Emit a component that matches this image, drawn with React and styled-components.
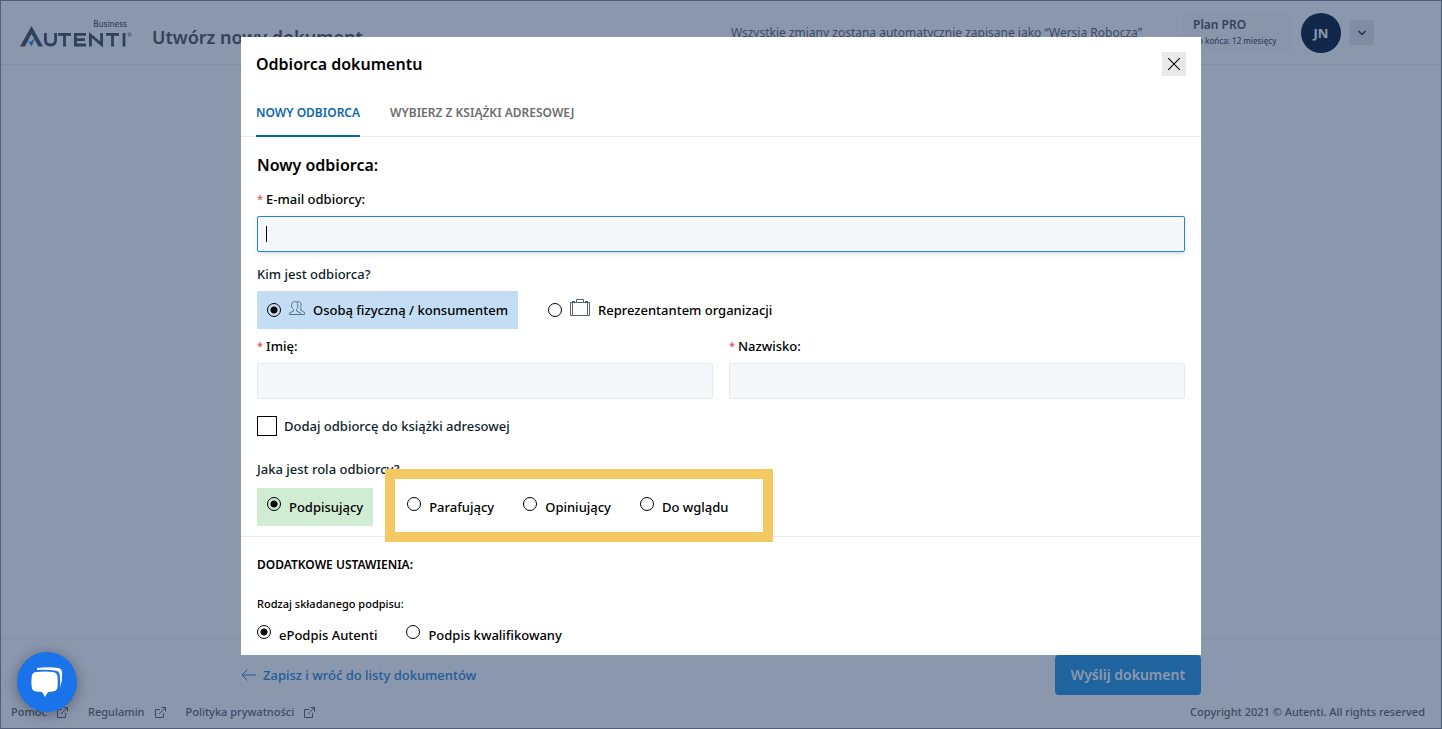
import React, { useState } from "react";
import styled, { createGlobalStyle } from "styled-components";

const FOOTER_LINKS = ["Pomoc", "Regulamin", "Polityka prywatności"];
const OTHER_ROLES = ["Parafujący", "Opiniujący", "Do wglądu"];

const Logo = () => (
  <LogoBox>
    <LogoTag>Business</LogoTag>
    <svg width="112" height="22" viewBox="0 0 112 22" fill="none" aria-label="Autenti">
      <path d="M0 20.500 L11.500 0 L23 20.500 H18.500 L11.500 8 L5 20.500 Z" fill="#4b5059" />
      <path d="M8 14.500 L10.500 16 L15 12 L11.500 20.500 Z" fill="#1d8be0" />
      <g stroke="#4b5059" strokeWidth="2.800">
        <path d="M25.400 7 V14 Q25.400 19 30.500 19 Q35.600 19 35.600 14 V7" />
        <path d="M38 8.400 H51 M44.500 8.400 V20.500" />
        <path d="M66 8.400 H55.400 V19 H66 M55.400 13.700 H65" />
        <path d="M70.400 20.500 V9 L81.600 18.500 V7" />
        <path d="M86 8.400 H99 M92.500 8.400 V20.500" />
        <path d="M104 7 V20.500" />
      </g>
      <circle cx="109.500" cy="8.500" r="1.500" stroke="#4b5059" strokeWidth="0.800" />
    </svg>
  </LogoBox>
);

const PeopleIcon = () => (
  <svg width="16" height="16" viewBox="0 0 16 16" fill="none" stroke="#52728c" aria-hidden="true">
    <path d="M.5 14.500 V13 L4.500 11 V9.500 C1.500 7.500 2 1.500 5.500 1.500 C9.500 1.500 9.500 7.500 7.500 9.500 V11 L11.500 13 V14.500 Z" />
    <path d="M7.500 2 C12 .5 13 4.500 11.500 7.500 L12.500 8.500 L11 9.500 L15.500 12.500 V14.500 H11.500" />
  </svg>
);

const CaseIcon = () => (
  <svg width="20" height="18" viewBox="0 0 20 18" fill="none" stroke="#52646f" aria-hidden="true">
    <path d="M.5 3.500 H19.500 V16.500 H.5 Z M2.500 3.500 V16.500 M17.500 3.500 V16.500 M6.500 3.500 V.5 H13.500 V3.500" />
    <path d="M2 2.500 H5 M15 2.500 H18" />
  </svg>
);

const ExternalIcon = () => (
  <svg width="11" height="11" viewBox="0 0 11 11" fill="none" stroke="currentColor" aria-hidden="true">
    <path d="M5 2.500 H.5 V10.500 H8.500 V6 M6.500 .5 H10.500 V4.500 M10.500 .5 L4 7" />
  </svg>
);

const ChatIcon = () => (
  <svg width="32" height="32" viewBox="0 0 32 32" aria-hidden="true">
    <path d="M6 2 Q18 .5 27 2 Q31 2.500 31.200 7 Q31.500 15 29 21.500 Q29.500 13 28.500 8 Q28 5 24 4.500 Q15 3.500 6 4 Z" fill="#fff" />
    <path d="M5 6 Q14 5 22 6 Q26 6.500 26.500 10.500 Q27 16 26.500 21 Q26 25 22 25.500 L17 26 L14 31 L11 26 L5 25.500 Q1 25 .7 21 Q0 16 .7 10.500 Q1 6.500 5 6 Z" fill="#fff" />
  </svg>
);

const Option = ({ name, value, current, onPick, tone, low, icon, children }) => (
  <OptionLabel $tone={tone} $low={low}>
    <Radio type="radio" name={name} checked={current === value} onChange={() => onPick(value)} />
    {icon}
    <span>{children}</span>
  </OptionLabel>
);

const App = () => {
  const [kind, setKind] = useState("person");
  const [role, setRole] = useState("Podpisujący");
  const [signature, setSignature] = useState("epodpis");

  return (
    <>
      <GlobalStyle />
      <Page>
        <Header>
          <Logo />
          <PageTitle>Utwórz nowy dokument</PageTitle>
          <SaveNote>Wszystkie zmiany zostaną automatycznie zapisane jako “Wersja Robocza”</SaveNote>
          <Plan>
            <strong>Plan PRO</strong>
            <small>do końca: 12 miesięcy</small>
          </Plan>
          <Avatar>JN</Avatar>
          <MenuButton aria-label="Menu">
            <svg width="8" height="6" viewBox="0 0 8 6" fill="none" stroke="#222b38" strokeWidth="1.500">
              <path d="M.5 1 L4 4.500 L7.500 1" />
            </svg>
          </MenuButton>
        </Header>
        <Workspace />
        <ActionBar>
          <BackLink href="#">
            <svg width="15" height="12" viewBox="0 0 15 12" fill="none" stroke="currentColor">
              <path d="M15 6 H1 M6.500 .5 L1 6 L6.500 11.500" />
            </svg>
            Zapisz i wróć do listy dokumentów
          </BackLink>
          <SendButton>Wyślij dokument</SendButton>
        </ActionBar>
        <Footer>
          {FOOTER_LINKS.map((text) => (
            <FooterLink key={text} href="#">
              {text}
              <ExternalIcon />
            </FooterLink>
          ))}
          <Copyright>Copyright 2021 © Autenti. All rights reserved</Copyright>
        </Footer>
      </Page>

      <Overlay>
        <Modal role="dialog" aria-labelledby="modal-title">
          <ModalHeader>
            <ModalTitle id="modal-title">Odbiorca dokumentu</ModalTitle>
            <CloseButton aria-label="Zamknij">
              <svg width="12" height="12" viewBox="0 0 12 12" stroke="#111" strokeWidth="1.200">
                <path d="M0 0 L12 12 M12 0 L0 12" />
              </svg>
            </CloseButton>
          </ModalHeader>
          <Tabs>
            <Tab $active>NOWY ODBIORCA</Tab>
            <Tab>WYBIERZ Z KSIĄŻKI ADRESOWEJ</Tab>
          </Tabs>

          <Section>
            <SectionTitle>Nowy odbiorca:</SectionTitle>
            <Field>
              <Label htmlFor="email"><Star>*</Star>E-mail odbiorcy:</Label>
              <InputWrap>
                <Input id="email" type="email" $focused />
                <Caret />
              </InputWrap>
            </Field>
            <Question>Kim jest odbiorca?</Question>
            <KindRow>
              <Option name="kind" value="person" current={kind} onPick={setKind} tone="#c3def4" icon={<PeopleIcon />}>
                Osobą fizyczną / konsumentem
              </Option>
              <Option name="kind" value="company" current={kind} onPick={setKind} icon={<CaseIcon />}>
                Reprezentantem organizacji
              </Option>
            </KindRow>
            <Columns>
              <Field>
                <Label htmlFor="first"><Star>*</Star>Imię:</Label>
                <Input id="first" />
              </Field>
              <Field>
                <Label htmlFor="last"><Star>*</Star>Nazwisko:</Label>
                <Input id="last" />
              </Field>
            </Columns>
            <CheckLabel>
              <Checkbox type="checkbox" />
              Dodaj odbiorcę do książki adresowej
            </CheckLabel>
            <Question>Jaka jest rola odbiorcy?</Question>
            <RoleRow>
              <Option name="role" value="Podpisujący" current={role} onPick={setRole} tone="#d0ecd3" low>
                Podpisujący
              </Option>
              <Highlighted>
                {OTHER_ROLES.map((r) => (
                  <Option key={r} name="role" value={r} current={role} onPick={setRole} low>
                    {r}
                  </Option>
                ))}
              </Highlighted>
            </RoleRow>
          </Section>

          <Settings>
            <SettingsTitle>DODATKOWE USTAWIENIA:</SettingsTitle>
            <SmallQuestion>Rodzaj składanego podpisu:</SmallQuestion>
            <SignatureRow>
              <Option name="sign" value="epodpis" current={signature} onPick={setSignature} low>
                ePodpis Autenti
              </Option>
              <Option name="sign" value="qualified" current={signature} onPick={setSignature} low>
                Podpis kwalifikowany
              </Option>
            </SignatureRow>
          </Settings>
        </Modal>
      </Overlay>

      <ChatButton aria-label="Czat">
        <ChatIcon />
      </ChatButton>
    </>
  );
};

export default App;

const GlobalStyle = createGlobalStyle`
  * {
    box-sizing: border-box;
  }
  body {
    margin: 0;
    font-family: "Noto Sans", "Open Sans", sans-serif;
    font-size: 13px;
    font-weight: 500;
    line-height: 20px;
    color: #000;
  }
  button, input {
    font: inherit;
  }
  button {
    cursor: pointer;
    border: 0;
    padding: 0;
  }
`;

const Page = styled.div`
  min-height: 100vh;
  display: flex;
  flex-direction: column;
  border: 1px solid #8c8c98;
  background: #fff;
`;

const Header = styled.header`
  height: 64px;
  display: flex;
  align-items: center;
  padding: 0 67px 0 19px;
  border-bottom: 1px solid #eee;
`;

const LogoBox = styled.div`
  display: flex;
  flex-direction: column;
  width: 112px;
`;

const LogoTag = styled.span`
  align-self: flex-end;
  margin-bottom: -4px;
  padding-right: 5px;
  font-size: 8px;
  line-height: 12px;
  color: #505458;
`;

const PageTitle = styled.h1`
  margin: 8px auto 0 20px;
  font-size: 18px;
  font-weight: 600;
  line-height: 24px;
  color: #505458;
`;

const SaveNote = styled.span`
  margin-right: 41px;
  font-size: 12px;
  font-weight: 400;
  color: #62666c;
`;

const Plan = styled.div`
  display: flex;
  flex-direction: column;
  width: 108px;
  padding: 3px 9px;
  margin-right: 10px;
  border: 1px solid #f6f7f9;
  background: #fafafb;
  color: #50555e;
  white-space: nowrap;

  strong {
    font-size: 12px;
    font-weight: 600;
    line-height: 16px;
  }
  small {
    font-size: 8px;
    line-height: 16px;
  }
`;

const Avatar = styled.div`
  display: grid;
  place-items: center;
  width: 40px;
  height: 40px;
  border-radius: 50%;
  background: #0c203a;
  color: #fff;
  font-weight: 700;
`;

const MenuButton = styled.button`
  width: 25px;
  height: 25px;
  margin-left: 8px;
  display: grid;
  place-items: center;
  border-radius: 2px;
  background: #e8e9ec;
`;

const Workspace = styled.main`
  flex: 1;
`;

const ActionBar = styled.div`
  display: flex;
  align-items: center;
  justify-content: space-between;
  height: 58px;
  padding: 14px max(16px, calc(50% - 480px)) 0;
  border-top: 1px solid #eee;
`;

const BackLink = styled.a`
  display: flex;
  align-items: center;
  gap: 7px;
  color: #2c8bd2;
  text-decoration: none;
`;

const SendButton = styled.button`
  width: 146px;
  height: 40px;
  border-radius: 4px;
  background: #2896e2;
  color: #fff;
  font-size: 14px;
  font-weight: 600;
`;

const Footer = styled.footer`
  display: flex;
  align-items: center;
  gap: 20px;
  height: 32px;
  padding: 0 16px 0 10px;
  font-size: 11px;
  color: #62666c;
`;

const FooterLink = styled.a`
  display: flex;
  align-items: center;
  gap: 10px;
  color: inherit;
  text-decoration: none;
`;

const Copyright = styled.span`
  margin-left: auto;
`;

const Overlay = styled.div`
  position: fixed;
  inset: 0;
  padding: 37px 16px 74px;
  background: rgba(22, 48, 92, 0.5);
`;

const Modal = styled.div`
  max-width: 960px;
  height: 100%;
  margin: 0 auto;
  overflow: hidden;
  background: #fff;
`;

const ModalHeader = styled.div`
  display: flex;
  align-items: center;
  justify-content: space-between;
  height: 54px;
  padding: 0 15px;
`;

const ModalTitle = styled.h2`
  margin: 0;
  font-size: 16px;
  font-weight: 600;
  line-height: 24px;
`;

const CloseButton = styled.button`
  width: 24px;
  height: 24px;
  display: grid;
  place-items: center;
  background: #e9e9e9;
`;

const Tabs = styled.div`
  display: flex;
  gap: 30px;
  padding: 0 15px;
  height: 46px;
  border-bottom: 1px solid #e8e8e8;
`;

const Tab = styled.button`
  height: 46px;
  border-bottom: 2px solid ${(props) => (props.$active ? "#076a94" : "transparent")};
  background: none;
  color: ${(props) => (props.$active ? "#0b69ab" : "#6d6d6d")};
  font-size: 12px;
  font-weight: 600;
`;

const Section = styled.section`
  display: flex;
  flex-direction: column;
  padding: 16px 16px 10px;
  border-bottom: 1px solid #e8e8e8;
`;

const SectionTitle = styled.h3`
  margin: 0 0 12px;
  font-size: 16px;
  font-weight: 600;
  line-height: 24px;
`;

const Field = styled.div`
  display: flex;
  flex-direction: column;
  gap: 7px;
`;

const Label = styled.label`
  display: flex;
  gap: 3px;
`;

const Star = styled.span`
  font-size: 11px;
  color: #f04b4b;
`;

const InputWrap = styled.div`
  position: relative;
  display: grid;
`;

const Input = styled.input`
  width: 100%;
  height: 36px;
  padding: 0 8px;
  border: 1px solid ${(props) => (props.$focused ? "#2b87c0" : "#e4e9ec")};
  border-radius: 2px;
  outline: none;
  background: #f4f8fb;
  box-shadow: ${(props) => (props.$focused ? "0 2px 4px rgba(0, 40, 70, 0.15)" : "none")};
`;

const Caret = styled.span`
  position: absolute;
  left: 9px;
  top: 10px;
  width: 1px;
  height: 16px;
  background: #000;
`;

const Question = styled.div`
  margin-top: 12px;
  color: #0c1d2c;
`;

const OptionLabel = styled.label`
  display: flex;
  align-items: center;
  gap: 8px;
  height: 38px;
  padding: 0 10px;
  background: ${(props) => props.$tone || "transparent"};
  white-space: nowrap;

  svg {
    margin-bottom: 4px;
  }
  input {
    margin-bottom: ${(props) => (props.$low ? "6px" : "0")};
  }
`;

const Radio = styled.input`
  appearance: none;
  flex: none;
  width: 14px;
  height: 14px;
  margin: 0;
  border: 1px solid #000;
  border-radius: 50%;

  &:checked {
    background: radial-gradient(circle, #000 3px, transparent 4px);
  }
`;

const KindRow = styled.div`
  display: flex;
  gap: 20px;
  margin: 7px 0;
`;

const Columns = styled.div`
  display: grid;
  grid-template-columns: 1fr 1fr;
  gap: 16px;
`;

const CheckLabel = styled.label`
  display: flex;
  align-items: center;
  align-self: flex-start;
  gap: 7px;
  margin: 17px 0 11px;
  color: #0c1d2c;
`;

const Checkbox = styled.input`
  appearance: none;
  width: 20px;
  height: 20px;
  margin: 0;
  border: 1px solid #000;
  background: #fff;
`;

const RoleRow = styled.div`
  display: flex;
  gap: 24px;
  margin-top: 9px;
`;

const Highlighted = styled.div`
  position: relative;
  display: flex;
  gap: 9px;

  &::after {
    content: "";
    position: absolute;
    inset: -19px -34px -16px -12px;
    border: 10px solid #f4c962;
    pointer-events: none;
  }
`;

const Settings = styled.section`
  padding: 18px 16px;
`;

const SettingsTitle = styled.h4`
  margin: 0 0 19px;
  font-size: 12px;
  font-weight: 600;
  line-height: 20px;
`;

const SmallQuestion = styled.div`
  font-size: 11px;
`;

const SignatureRow = styled.div`
  display: flex;
  gap: 9px;
  margin: 2px -10px 0;
`;

const ChatButton = styled.button`
  position: fixed;
  left: 17px;
  bottom: 17px;
  width: 60px;
  height: 60px;
  display: grid;
  place-items: center;
  border-radius: 50%;
  background: #1a73e8;
  box-shadow: 0 2px 14px rgba(0, 0, 0, 0.35);
`;
